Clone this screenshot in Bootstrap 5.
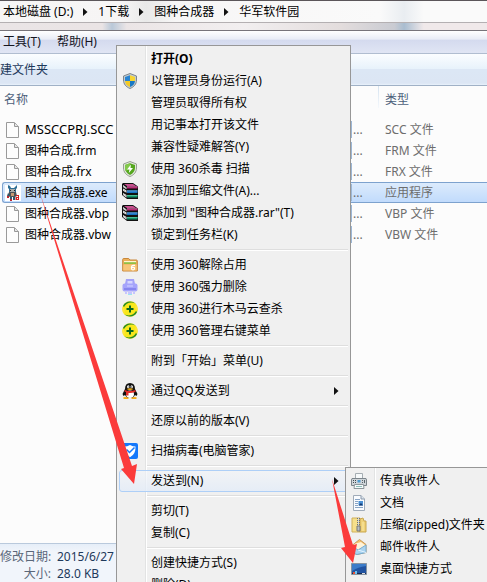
<!DOCTYPE html>
<html lang="zh-CN">
<head>
<meta charset="utf-8">
<meta name="viewport" content="width=device-width, initial-scale=1">
<title>华军软件园</title>
<link href="https://cdn.jsdelivr.net/npm/bootstrap@5.3.0/dist/css/bootstrap.min.css" rel="stylesheet">
<style>
  body { font-family: "Noto Sans", "Noto Sans CJK SC", sans-serif; font-size: 12px; line-height: 20px; color: #000; background: #fcfcfc; }
  button { background: none; border: 0; padding: 0; color: inherit; text-align: left; white-space: nowrap; }
  a { color: inherit; text-decoration: none; }
  .explorer { white-space: nowrap; }
  .address { height: 23px; gap: 10px; padding-left: 3px; border-top: 1px solid #5b565a; border-bottom: 1px solid #b4b0b2; background: linear-gradient(90deg, #f7f6f6 0, #f6f5f5 25%, #e9e9e9 30%, #f7f6f6 36%, #fafafa 78%, #e9edf1 83%, #fafafa 87%); }
  .frame-gap { height: 8px; border-bottom: 1px solid #77747a; background: linear-gradient(90deg, #eae5e6 0, #eae4e5 21%, #b9c8d8 23%, #ebe5e6 26%, #f2eff0 50%, #e3dddd 70%, #c9cbd2 81%, #a9bdd0 83%, #f0e9ea 87%); }
  .menubar { height: 23px; gap: 16px; padding-left: 3px; color: #15151f; border-bottom: 1px solid #b0bdd0; background: linear-gradient(#fff 0, #e8ecf6 38%, #d4daee 40%, #e0e5f4 100%); }
  .toolbar { height: 32px; color: #1e395b; border-bottom: 1px solid #a0b1c6; background: linear-gradient(#fbfdff 0, #e7f2fb 49%, #dce7f5 50%, #dce6f4 94%, #e9f2fb 100%); }
  .files { table-layout: fixed; border-collapse: separate; border-spacing: 0; }
  .files th { height: 33px; padding: 4px 0 0 2px; font-weight: 400; color: #4c607a; vertical-align: top; }
  .files td { height: 21px; padding: 0; border-top: 1px solid transparent; border-bottom: 1px solid transparent; line-height: 19px; color: #6d6d6d; }
  .c-edge { width: 2px; } .c-name { width: 349px; } .c-date { width: 27px; }
  .files .type-col { padding-left: 7px; }
  .files th.type-col { background: linear-gradient(#d5e3f0, #f4f8fc) no-repeat 0 0 / 1px 22px; }
  .files .picked td { background: linear-gradient(#dcebfc, #c1dbfc); border-color: #7da2ce; }
  .files .picked td:nth-child(2) { border-left: 1px solid #7da2ce; border-radius: 3px 0 0 3px; }
  .files .picked td:first-child { background: none; border-color: transparent; }
  .fname { color: #000; gap: 4px; padding-left: 3px; }
  .picked .fname { padding-left: 2px; }
  .caps { font-size: 13px; }
  .cut { border-left: 1px solid #9cb7d6; padding-left: 1px; line-height: 12px; }
  .details { padding-top: 5px; border-top: 1px solid #b9c9dc; background: linear-gradient(#e6eef8, #f1f5fb 8px); color: #1e395b; line-height: 16px; }
  .details dl { grid-template-columns: 51px auto; gap: 1px 6px; }
  .details dt { font-weight: 400; color: #5a6779; }
  .popup { position: absolute; padding: 2px; border: 1px solid #979797; background: linear-gradient(90deg, transparent 28px, #e2e3e3 28px, #e2e3e3 29px, #fff 29px, #fff 30px, transparent 30px) #f0f0f0; }
  .main-menu { left: 116px; top: 45px; width: 235px; }
  .send-menu { left: 345px; top: 467px; width: 164px; }
  .popup button { height: 22px; width: 100%; gap: 13px; padding: 0 8px 0 2px; border: 1px solid transparent; border-radius: 3px; line-height: 20px; }
  .popup button:hover, .popup .open-item { border-color: #aecff7; background: linear-gradient(#f3f5f999, #e3ecf8cc); }
  .popup .blank { width: 16px; height: 16px; flex: none; }
  .popup .split { height: 8px; margin-left: 28px; padding-top: 3px; }
  .popup .split::before { content: ""; display: block; height: 2px; background: linear-gradient(#dedede 50%, #fff 50%); }
  .ico { width: 16px; height: 16px; flex: none; }
  .tri { width: 5px; height: 8px; flex: none; }
  .arrows { position: absolute; left: 0; top: 0; pointer-events: none; }
</style>
<script src="https://cdn.jsdelivr.net/npm/bootstrap@5.3.0/dist/js/bootstrap.bundle.min.js"></script>
</head>
<body class="overflow-hidden">
<svg class="d-none">
  <symbol id="i-tri" viewBox="0 0 5 8"><path d="M0 0 4.500 4 0 8Z" fill="#111"/></symbol>
  <symbol id="i-file" viewBox="0 0 16 16"><path d="M1.500.5h8l4 4v11h-12Z" fill="#fdfdfd" stroke="#9a9a9a"/><path d="M9.500 1v3.500h4" fill="#e6e6e6" stroke="#989898"/></symbol>
  <symbol id="i-exe" viewBox="0 0 16 16"><path d="M0 0h16v16H0z" fill="#fff"/><path d="m3 0 2 1 1 2h3l2-2 1-1v3l-1 1v3H4V4L3 3Z" fill="#2f6f96"/><path d="M5 4h5v3H5z" fill="#a9aba8"/><path d="M5 5h1v1H5zM9 5h1v1H9z" fill="#222"/><path d="M4 7h7l1 4-2 1H5l-2-1Z" fill="#4d5358"/><path d="M6 8h3v3H6z" fill="#c79a72"/><path d="m3 8-1 3 1 1 2-2ZM5 12h2v3H5zM8 12h2v3H8z" fill="#32586b"/><path d="M2 11h2v2H2zM5 14h2v2H5z" fill="#bd2730"/><path d="M11 10h3v5h-3.500v-3H13v-1h-2Zm1 3v1h1v-1Z" fill="#d22222" fill-rule="evenodd"/></symbol>
  <symbol id="i-uac" viewBox="0 0 16 16"><path d="M8 .5 14.500 3v4c0 4-2.500 7-6.500 8.500C4 14 1.500 11 1.500 7V3Z" fill="#c3cbd0" stroke="#7d868c"/><path d="M8 2.200V8H3V4Z" fill="#2784d2"/><path d="M8 2.200V8h5V4Z" fill="#f7d532"/><path d="M3 8h5v6C5 12.700 3.300 11 3 8Z" fill="#f4ca25"/><path d="M13 8H8v6c3-1.300 4.700-3 5-6Z" fill="#1879c4"/></symbol>
  <symbol id="i-av" viewBox="0 0 16 16"><path d="M8 .5 14.500 3v4c0 4-2.500 7-6.500 8.500C4 14 1.500 11 1.500 7V3Z" fill="#e3e6df" stroke="#95a08e"/><path d="M8 2.200 13 4v3c0 3-2 5.500-5 6.900C5 12.500 3 10 3 7V4Z" fill="#55a71e"/><path d="M8 2.200V8l-4.500 2C2.800 8 3 6 3 4Z" fill="#82c84a"/><path d="M9 3.500 5 8.500h2.500L6.800 12 11 7H8.500Z" fill="#fff"/></symbol>
  <symbol id="i-rar" viewBox="0 0 16 16">
    <path d="M1 0h10l5 3.500V16H5L0 12V1Z" fill="#111"/>
    <path d="M2 1h9l3 2H5Z" fill="#c8508f"/><path d="M5 3.500h10.500v2H5z" fill="#b01868"/><path d="M5 3.500h10.500v.7H5z" fill="#e58abb"/>
    <path d="m1 2 3.500 2.500v1.700L1 4Z" fill="#fff"/>
    <path d="m1 5.500 3.500 2v2.200L1 7.800Z" fill="#fff"/><path d="M5 7.500h10.500V10H5z" fill="#176fc0"/><path d="M5 7.500h10.500v.8H5z" fill="#74b8ef"/>
    <path d="m1 10 3.500 2v2.500L1 12Z" fill="#fff"/><path d="M5 12h10.500v2.500H5z" fill="#12906a"/><path d="M5 12h10.500v.8H5z" fill="#5bcba2"/>
    <path d="m1 3 3.500 2.300M1 6.700l3.500 2M1 11l3.500 2.200" stroke="#777" stroke-width=".5"/>
  </symbol>
  <symbol id="i-folder" viewBox="0 0 16 16"><path d="M.7 2.500q0-1 1-1h5L8 3h6.500q.8 0 .8 1v10H.7Z" fill="#edb05b" stroke="#c8873b"/><path d="M2 4.500h12V7H2z" fill="#91bf44"/><path d="M2 4h12v1.200H2z" fill="#fff6cf"/><path d="M1.300 7.500h13.400v6H1.300Z" fill="#f8c678"/><path d="M13 8.300h-2q-1.500 0-1.500 2v1q0 1.700 1.500 1.700t1.500-1.400-1.500-1.300H9.600" fill="none" stroke="#fff" stroke-width="1.200"/></symbol>
  <symbol id="i-shred" viewBox="0 0 16 16"><path d="M4 0h8l1 5H3Z" fill="#a3a2f8"/><path d="M5.500 2h5v3h-5z" fill="#d6d7ff"/><rect y="4.500" x=".5" width="15" height="8" rx="2" fill="#a5a4fb"/><path d="M2 9h12v2H2z" fill="#8786ef"/><path d="M5 6h6v2H5z" fill="#bcbcff"/><path d="M3 13h2v2H3zM6 13h4v2H6zM11 13h2v2h-2z" fill="#c5c4ff"/><path d="M6 15h4v1H6z" fill="#9ce5f0"/></symbol>
  <symbol id="i-plus" viewBox="0 0 16 16"><circle cx="8" cy="8" r="7.800" fill="#f8e71b"/><path d="M1 5C3 0 10-1 14 3 9 0 4 2 2 6ZM15 11c-2 5-9 6-13 2 5 3 10 1 12-3Z" fill="#258b29"/><path d="M14 3q2 3 1.500 7L13 7ZM2 13Q0 10 .5 6L3 9Z" fill="#ffe43b"/><path d="M7 4.500h2V7h2.500v2H9v2.500H7V9H4.500V7H7Z" fill="#096821"/></symbol>
  <symbol id="i-qq" viewBox="0 0 16 16"><path d="M3 6q0-6 5-6t5 6l2.500 5-1 2-1.500-1-2 3H5l-2-3-1.500 1-1-2Z" fill="#111"/><ellipse cx="8" cy="11.300" rx="4" ry="3.700" fill="#fff"/><ellipse cx="6.300" cy="3.700" rx="1.200" ry="1.500" fill="#fff"/><ellipse cx="9.700" cy="3.700" rx="1.200" ry="1.500" fill="#fff"/><path d="M6.500 3.500h1v1h-1zM8.800 3.500h1v1h-1z"/><path d="M4.500 6q3.500-1.500 7 0Q8 8 4.500 6ZM1 15q1-2 6 0l-1 1H2ZM9 15q5-2 6 0l-1 1h-4Z" fill="#f5ae18"/><path d="M2.500 7q5.500 2 11 0v2q-4 1.300-7 1v2.500H4V9L2.500 8.500Z" fill="#e42e2b"/></symbol>
  <symbol id="i-guard" viewBox="0 0 16 16"><rect width="16" height="16" rx="2" fill="#1478fb"/><path d="M8 2q3 1.500 5.500 1.500Q14 11 8 14.300 2 11 2.500 3.500 5 3.500 8 2Z" fill="#fff"/><path d="m4.500 6.500 3 3 5-5" fill="none" stroke="#1478fb" stroke-width="1.500"/></symbol>
  <symbol id="i-fax" viewBox="0 0 16 16"><path d="M4.500.5h7v5h-7Z" fill="#f6f9fa" stroke="#a5adb2"/><path d="M1 5.500h14l.5 1.500v5.500H.5V7Z" fill="#cfd5d9" stroke="#7c858b"/><path d="M2 7h1v1H2zM4 7h1v1H4zM2 9h1v1H2zM4 9h1v1H4z" fill="#3f484e"/><path d="M6.500 7h3v2.500h-3z" fill="#4c9bd0"/><path d="M11 7h1v1h-1zM13 7h1v3h-1zM11 9h1v1h-1z" fill="#59656c"/><path d="M3.500 11.500h9l.5 4H3Z" fill="#f6fafb" stroke="#8c969b"/><path d="M5 13.500h6" stroke="#8cc1b9"/></symbol>
  <symbol id="i-doc" viewBox="0 0 16 16"><path d="M2.500.5H10l3.500 3.500v11.500h-11Z" fill="#fafcff" stroke="#a0abb8"/><path d="M10 .5V4h3.500" fill="#dde5ee" stroke="#8b98a8"/><path d="M4 4.500h5M4 6.500h3M4 8.500h3M4 10.500h3M4 12.500h8" stroke="#8aa5c5"/><path d="M7.500 6H12v4.500H7.500z" fill="#4a90d4"/><path d="m8 10 2-2 2 2.500H8Z" fill="#14386f"/></symbol>
  <symbol id="i-zip" viewBox="0 0 16 16"><path d="M1 1h8v14H1z" fill="#f6df8b" stroke="#d0b15a"/><path d="m9 2 3-1 1 3h2v11H9Z" fill="#f0d279" stroke="#c9a74f"/><path d="M12 5v9" stroke="#fae9a5"/><path d="M7.500 1v8" stroke="#6b6f72" stroke-width="3" stroke-dasharray="1"/><path d="M7.500 1v9" stroke="#d5d9db"/><path d="M6 9h3v5H6z" fill="#b8bfc3" stroke="#777"/></symbol>
  <symbol id="i-mail" viewBox="0 0 16 16"><path d="M1 6.500 8.500.5 15 5.500v8L6 15.500l-5-2Z" fill="#f5be69" stroke="#c59a5c"/><path d="m3 5 7-2 4 3v4H4Z" fill="#fff3d8"/><path d="m1 7 6 4 8-5v7.500L6 15.500l-5-2Z" fill="#a9d3f0" stroke="#78acd1"/><path d="m7 11 8 2.500" stroke="#e5f4ff"/></symbol>
  <symbol id="i-desk" viewBox="0 0 16 16"><path d="M.5 2.500h15v11H.5z" fill="#2153a0" stroke="#8794a1"/><path d="M1 3h14v2Q7 6 1 10Z" fill="#3c7cc9"/><path d="M1 12h14v1H1z" fill="#192b4f"/><path d="M2 11h2v2H2z" fill="#e95132"/><path d="M4 10h2v3H4z" fill="#6dc3ed"/><path d="M11 12h3v1h-3z" fill="#ddd"/></symbol>
</svg>

<main class="explorer d-flex flex-column vh-100">
  <nav class="address d-flex align-items-center" aria-label="路径">
    <a href="#">本地磁盘 (D:)</a><svg class="tri"><use href="#i-tri"/></svg>
    <a href="#">1下载</a><svg class="tri"><use href="#i-tri"/></svg>
    <a href="#">图种合成器</a><svg class="tri"><use href="#i-tri"/></svg>
    <a href="#">华军软件园</a>
  </nav>
  <div class="frame-gap"></div>
  <div class="menubar d-flex align-items-center"><button type="button">工具(T)</button><button type="button">帮助(H)</button></div>
  <div class="toolbar d-flex align-items-center"><button type="button">建文件夹</button></div>

  <div class="flex-grow-1 overflow-hidden">
    <table class="files w-100">
      <colgroup><col class="c-edge"><col class="c-name"><col class="c-date"><col></colgroup>
      <thead><tr><td></td><th scope="col">名称</th><td></td><th class="type-col" scope="col">类型</th></tr></thead>
      <tbody>
        <tr><td></td><td><div class="fname d-flex align-items-center"><svg class="ico"><use href="#i-file"/></svg><span class="caps">MSSCCPRJ.SCC</span></div></td><td><span class="cut">...</span></td><td class="type-col">SCC 文件</td></tr>
        <tr><td></td><td><div class="fname d-flex align-items-center"><svg class="ico"><use href="#i-file"/></svg>图种合成.frm</div></td><td><span class="cut">...</span></td><td class="type-col">FRM 文件</td></tr>
        <tr><td></td><td><div class="fname d-flex align-items-center"><svg class="ico"><use href="#i-file"/></svg>图种合成.frx</div></td><td><span class="cut">...</span></td><td class="type-col">FRX 文件</td></tr>
        <tr class="picked"><td></td><td><div class="fname d-flex align-items-center"><svg class="ico"><use href="#i-exe"/></svg>图种合成器.exe</div></td><td><span class="cut">...</span></td><td class="type-col">应用程序</td></tr>
        <tr><td></td><td><div class="fname d-flex align-items-center"><svg class="ico"><use href="#i-file"/></svg>图种合成器.vbp</div></td><td><span class="cut">...</span></td><td class="type-col">VBP 文件</td></tr>
        <tr><td></td><td><div class="fname d-flex align-items-center"><svg class="ico"><use href="#i-file"/></svg>图种合成器.vbw</div></td><td><span class="cut">...</span></td><td class="type-col">VBW 文件</td></tr>
      </tbody>
    </table>
  </div>

  <footer class="details">
    <dl class="d-grid m-0">
      <dt class="text-end">修改日期:</dt><dd class="m-0">2015/6/27</dd>
      <dt class="text-end">大小:</dt><dd class="m-0">28.0 KB</dd>
    </dl>
  </footer>
</main>

<div class="popup main-menu">
  <button type="button" class="d-flex align-items-center fw-bold"><span class="blank"></span>打开(O)</button>
  <button type="button" class="d-flex align-items-center"><svg class="ico"><use href="#i-uac"/></svg>以管理员身份运行(A)</button>
  <button type="button" class="d-flex align-items-center"><span class="blank"></span>管理员取得所有权</button>
  <button type="button" class="d-flex align-items-center"><span class="blank"></span>用记事本打开该文件</button>
  <button type="button" class="d-flex align-items-center"><span class="blank"></span>兼容性疑难解答(Y)</button>
  <button type="button" class="d-flex align-items-center"><svg class="ico"><use href="#i-av"/></svg>使用 360杀毒 扫描</button>
  <button type="button" class="d-flex align-items-center"><svg class="ico"><use href="#i-rar"/></svg>添加到压缩文件(A)...</button>
  <button type="button" class="d-flex align-items-center"><svg class="ico"><use href="#i-rar"/></svg>添加到 "图种合成器.rar"(T)</button>
  <button type="button" class="d-flex align-items-center"><span class="blank"></span>锁定到任务栏(K)</button>
  <div class="split"></div>
  <button type="button" class="d-flex align-items-center"><svg class="ico"><use href="#i-folder"/></svg>使用 360解除占用</button>
  <button type="button" class="d-flex align-items-center"><svg class="ico"><use href="#i-shred"/></svg>使用 360强力删除</button>
  <button type="button" class="d-flex align-items-center"><svg class="ico"><use href="#i-plus"/></svg>使用 360进行木马云查杀</button>
  <button type="button" class="d-flex align-items-center"><svg class="ico"><use href="#i-plus"/></svg>使用 360管理右键菜单</button>
  <div class="split"></div>
  <button type="button" class="d-flex align-items-center"><span class="blank"></span>附到「开始」菜单(U)</button>
  <div class="split"></div>
  <button type="button" class="d-flex align-items-center"><svg class="ico"><use href="#i-qq"/></svg>通过QQ发送到<svg class="tri ms-auto"><use href="#i-tri"/></svg></button>
  <div class="split"></div>
  <button type="button" class="d-flex align-items-center"><span class="blank"></span>还原以前的版本(V)</button>
  <div class="split"></div>
  <button type="button" class="d-flex align-items-center"><svg class="ico"><use href="#i-guard"/></svg>扫描病毒(电脑管家)</button>
  <div class="split"></div>
  <button type="button" class="open-item d-flex align-items-center" aria-expanded="true"><span class="blank"></span>发送到(N)<svg class="tri ms-auto"><use href="#i-tri"/></svg></button>
  <div class="split"></div>
  <button type="button" class="d-flex align-items-center"><span class="blank"></span>剪切(T)</button>
  <button type="button" class="d-flex align-items-center"><span class="blank"></span>复制(C)</button>
  <div class="split"></div>
  <button type="button" class="d-flex align-items-center"><span class="blank"></span>创建快捷方式(S)</button>
  <button type="button" class="d-flex align-items-center"><span class="blank"></span>删除(D)</button>
</div>

<div class="popup send-menu">
  <button type="button" class="d-flex align-items-center"><svg class="ico"><use href="#i-fax"/></svg>传真收件人</button>
  <button type="button" class="d-flex align-items-center"><svg class="ico"><use href="#i-doc"/></svg>文档</button>
  <button type="button" class="d-flex align-items-center"><svg class="ico"><use href="#i-zip"/></svg>压缩(zipped)文件夹</button>
  <button type="button" class="d-flex align-items-center"><svg class="ico"><use href="#i-mail"/></svg>邮件收件人</button>
  <button type="button" class="d-flex align-items-center"><svg class="ico"><use href="#i-desk"/></svg>桌面快捷方式</button>
</div>

<svg class="arrows" width="487" height="582" viewBox="0 0 487 582" aria-hidden="true">
  <path d="M39 190 132 466 137 464 134 484 121 469 124 468Z" fill="#fb3b3b"/>
  <path d="M332 479 353 545 357 544 353 563 341 548 345 547Z" fill="#fb3b3b"/>
</svg>
</body>
</html>
